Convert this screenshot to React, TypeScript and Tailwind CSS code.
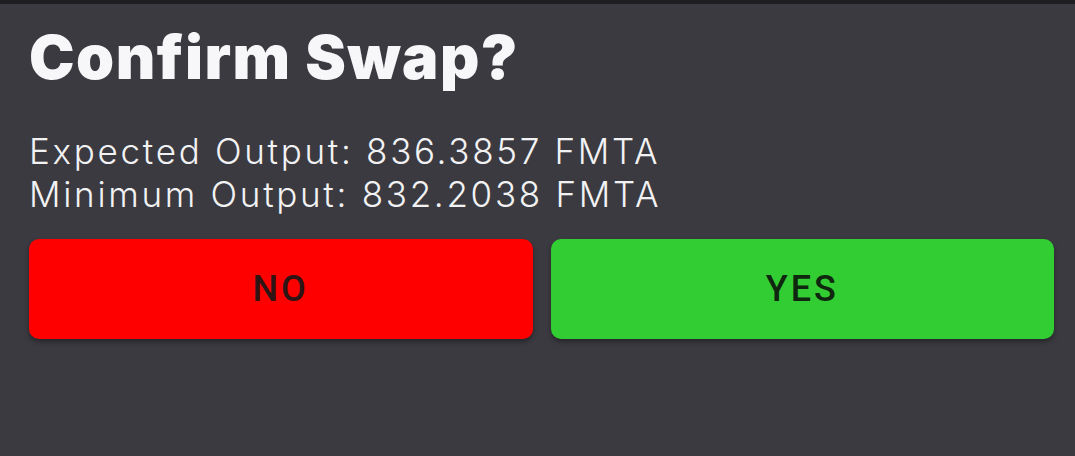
import React from 'react';

const App: React.FC = () => {
  return (
    <div className="w-[1075px] h-[456px] bg-[#3a3a40] flex flex-col overflow-hidden">
      <div className="h-[4px] bg-[#1d1d22]"></div>
      <div className="pl-[29px] pr-[21px] pt-[18px] flex flex-col">
        <h1 className="text-[61px] leading-[70px] font-black text-[#f7f7f9] tracking-[1.5px] font-['Inter',sans-serif]">
          Confirm Swap?
        </h1>
        <div className="mt-[38px] text-[35px] leading-[43px] font-light text-[#f2f2f4] tracking-[2.7px] font-['Inter',sans-serif]">
          <p>Expected Output: 836.3857 FMTA</p>
          <p>Minimum Output: 832.2038 FMTA</p>
        </div>
        <div className="mt-[23px] flex gap-[18px]">
          <button className="flex-1 h-[100px] rounded-[10px] bg-[#ff0000] shadow-[0_3px_5px_rgba(0,0,0,0.35)] text-[36px] font-medium tracking-[3px] text-[#2e1414] font-['Roboto',sans-serif]">
            NO
          </button>
          <button className="flex-1 h-[100px] rounded-[10px] bg-[#32cd32] shadow-[0_3px_5px_rgba(0,0,0,0.35)] text-[36px] font-medium tracking-[3px] text-[#0f260f] font-['Roboto',sans-serif]">
            YES
          </button>
        </div>
      </div>
    </div>
  );
};

export default App;
